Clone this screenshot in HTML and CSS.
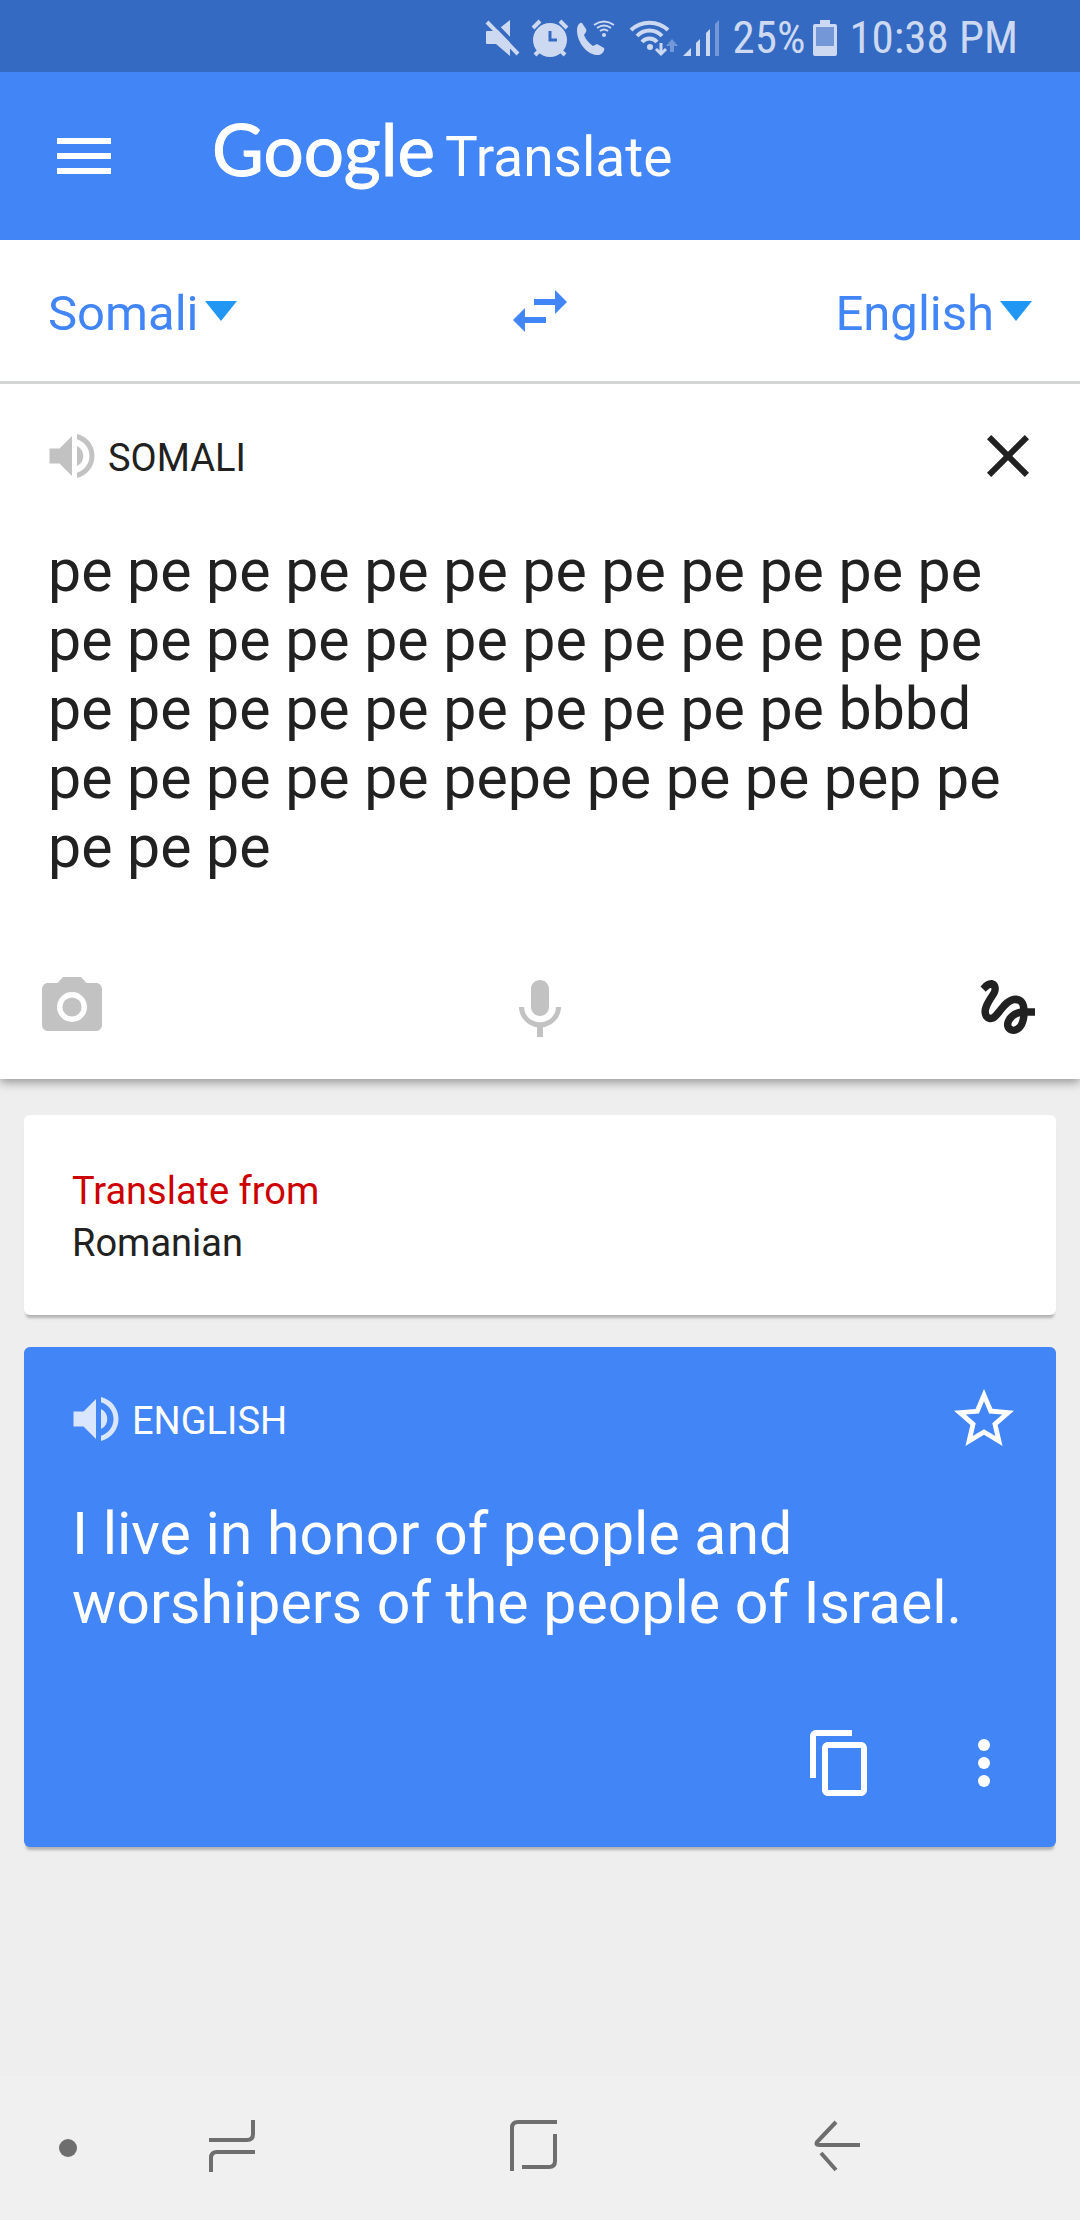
FILE: index.html
```html
<!DOCTYPE html>
<html lang="en">
<head>
<meta charset="utf-8">
<meta name="viewport" content="width=device-width, initial-scale=1">
<title>Google Translate</title>
<link rel="stylesheet" href="styles.css">
</head>
<body>
<div class="status">
  <svg class="status-icon" width="38" height="36" viewBox="0 0 38 36"><path fill="currentColor" d="M1 11h9L24 0v36L10 24H1q-1 0-1-1V12q0-1 1-1z"/><path class="cut" d="M4-1l31 32" stroke-width="4"/><path stroke="currentColor" stroke-width="4" d="M1 2l31 32"/></svg>
  <svg class="status-icon" width="42" height="36" viewBox="0 0 42 36"><circle cx="22" cy="20" r="17" fill="currentColor"/><path stroke="currentColor" stroke-width="4" d="M5 8l7-7M32 1l7 7M7 35l5-5M37 35l-5-5"/><path class="cut" fill="none" stroke-width="3" d="M22 11v9h7"/></svg>
  <svg class="status-icon" width="46" height="36" viewBox="0 0 46 36"><path fill="currentColor" d="M8 3l4 6c1 2 0 3-2 6 2 5 5 8 9 11l4-2 7 4c1 2-1 6-5 7C14 36 3 23 3 10c0-3 1-5 2-6q2-2 3-1z"/><circle cx="30" cy="15" r="2" fill="currentColor"/><path fill="none" stroke="currentColor" stroke-width="2" d="M26 11q4-3 8 0M23 8q7-5 14 0M20 5q10-7 20 0"/></svg>
  <svg class="status-icon" width="54" height="36" viewBox="0 0 54 36"><path fill="none" stroke="currentColor" stroke-width="4" d="M7 10a27 27 0 0 1 37 0M13 16a17 17 0 0 1 25 0M18 22a10 10 0 0 1 15 0"/><circle cx="26" cy="27" r="3" fill="currentColor"/><path fill="none" stroke="currentColor" stroke-width="3" d="M37 23v11M32 29l5 5 5-5"/><path class="dim" d="M48 19l6 7h-4v6h-4v-6h-4z"/></svg>
  <svg class="status-icon" width="42" height="36" viewBox="0 0 42 36"><path fill="currentColor" d="M1 36l8-8v8zM14 23l4-4v17h-4zM24 13l4-4v27h-4z"/><path class="dim" d="M33 4l4-4v36h-4z"/></svg>
  <span class="battery-level">25%</span>
  <svg class="status-icon" width="24" height="36" viewBox="0 0 24 36"><path fill="currentColor" d="M7 0h10v4h5q2 0 2 2v28q0 2-2 2H2q-2 0-2-2V6q0-2 2-2h5z"/><path class="dim" d="M3 7h18v19H3z"/></svg>
  <span class="clock">10:38 PM</span>
</div>

<header class="app-bar">
  <button class="icon-button" type="button" aria-label="Menu"><svg class="icon" viewBox="0 0 24 24"><path d="M3 18h18v-2H3v2zm0-5h18v-2H3v2zm0-7v2h18V6H3z"/></svg></button>
  <h1 class="brand"><span class="brand-google">Google</span><span class="brand-product">Translate</span></h1>
</header>

<div class="languages">
  <button class="language" type="button"><span class="language-name">Somali</span><svg class="caret" viewBox="0 0 32 20"><path d="M0 0h32L16 20z"/></svg></button>
  <button class="icon-button swap" type="button" aria-label="Swap languages"><svg class="icon" viewBox="0 0 24 24"><path d="M6.99 11L3 15l3.99 4v-3H14v-2H6.99v-3zM21 9l-3.99-4v3H10v2h7.01v3L21 9z"/></svg></button>
  <button class="language language-target" type="button"><span class="language-name">English</span><svg class="caret" viewBox="0 0 32 20"><path d="M0 0h32L16 20z"/></svg></button>
</div>

<main>
  <section class="source">
    <div class="panel-head">
      <button class="icon-button speak" type="button" aria-label="Listen to source"><svg class="icon-small" viewBox="0 0 24 24"><path d="M3 9v6h4l5 5V4L7 9H3zm13.500 3A4.500 4.500 0 0 0 14 7.970v8.050A4.470 4.470 0 0 0 16.500 12zM14 3.230v2.060c2.890.860 5 3.540 5 6.710s-2.110 5.850-5 6.710v2.060c4.010-.910 7-4.490 7-8.770s-2.990-7.860-7-8.770z"/></svg></button>
      <label class="panel-title" for="source-text">SOMALI</label>
      <button class="icon-button" type="button" aria-label="Clear text"><svg class="icon" viewBox="0 0 24 24"><path d="M19 6.410L17.590 5 12 10.590 6.410 5 5 6.410 10.590 12 5 17.590 6.410 19 12 13.410 17.590 19 19 17.590 13.410 12z"/></svg></button>
    </div>
    <textarea class="source-text" id="source-text" rows="5" spellcheck="false">pe pe pe pe pe pe pe pe pe pe pe pe pe pe pe pe pe pe pe pe pe pe pe pe pe pe pe pe pe pe pe pe pe pe bbbd pe pe pe pe pe pepe pe pe pe pep pe pe pe pe</textarea>
    <div class="input-tools">
      <button class="icon-button muted" type="button" aria-label="Camera"><svg class="icon" viewBox="0 0 24 24"><circle cx="12" cy="12" r="3.200"/><path d="M9 2L7.170 4H4c-1.100 0-2 .9-2 2v12c0 1.100.9 2 2 2h16c1.100 0 2-.9 2-2V6c0-1.100-.9-2-2-2h-3.170L15 2H9zm3 15a5 5 0 1 1 0-10 5 5 0 0 1 0 10z"/></svg></button>
      <button class="icon-button muted" type="button" aria-label="Voice"><svg class="icon" viewBox="0 -1 24 24"><path d="M12 14c1.660 0 2.990-1.340 2.990-3L15 5c0-1.660-1.340-3-3-3S9 3.340 9 5v6c0 1.660 1.340 3 3 3zm5.300-3c0 3-2.540 5.100-5.300 5.100S6.700 14 6.700 11H5c0 3.410 2.720 6.230 6 6.720V21h2v-3.280c3.280-.48 6-3.300 6-6.720h-1.700z"/></svg></button>
      <button class="icon-button" type="button" aria-label="Handwriting"><svg class="icon" viewBox="0 0 24 24"><path d="M4.590 6.890c.7-.71 1.400-1.350 1.710-1.220.5.2 0 1.030-.3 1.520-.25.42-2.860 3.890-2.860 6.310 0 1.280.48 2.340 1.340 2.980.75.56 1.740.73 2.640.46 1.070-.31 1.950-1.400 3.060-2.770 1.210-1.490 2.830-3.440 4.080-3.440 1.630 0 1.650 1.010 1.760 1.790-3.780.64-5.380 3.670-5.380 5.370 0 1.700 1.440 3.090 3.210 3.090 1.630 0 4.290-1.330 4.690-6.100H21v-2.500h-2.470c-.15-1.650-1.090-4.200-4.030-4.200-2.250 0-4.180 1.910-4.940 2.840-.58.73-2.060 2.480-2.290 2.720-.25.3-.68.84-1.110.84-.45 0-.72-.83-.36-1.920.35-1.090 1.400-2.860 1.850-3.520.78-1.140 1.300-1.920 1.300-3.280C8.950 3.690 7.310 3 6.440 3 5.120 3 3.970 4 3.720 4.250c-.36.36-.66.66-.88.93l1.750 1.710zm9.290 11.660c-.31 0-.74-.26-.74-.72 0-.6.73-2.200 2.870-2.760-.3 2.690-1.430 3.480-2.130 3.480z"/></svg></button>
    </div>
  </section>

  <div class="results">
    <section class="card suggestion">
      <p class="suggestion-title">Translate from</p>
      <a class="suggestion-link" href="#">Romanian</a>
    </section>

    <section class="card translation">
      <div class="panel-head">
        <button class="icon-button speak" type="button" aria-label="Listen to translation"><svg class="icon-small" viewBox="0 0 24 24"><path d="M3 9v6h4l5 5V4L7 9H3zm13.500 3A4.500 4.500 0 0 0 14 7.970v8.050A4.470 4.470 0 0 0 16.500 12zM14 3.230v2.060c2.890.860 5 3.540 5 6.710s-2.110 5.850-5 6.710v2.060c4.010-.910 7-4.490 7-8.770s-2.990-7.860-7-8.770z"/></svg></button>
        <h2 class="panel-title">ENGLISH</h2>
        <button class="icon-button" type="button" aria-label="Save"><svg class="icon" viewBox="0 0 24 24"><path d="M22 9.240l-7.190-.62L12 2 9.190 8.630 2 9.240l5.460 4.730L5.820 21 12 17.270 18.180 21l-1.630-7.030L22 9.240zM12 15.400l-3.760 2.270 1-4.280-3.320-2.880 4.380-.38L12 6.100l1.710 4.040 4.380.38-3.320 2.880 1 4.280L12 15.400z"/></svg></button>
      </div>
      <p class="translation-text">I live in honor of people and worshipers of the people of Israel.</p>
      <div class="translation-tools">
        <button class="icon-button" type="button" aria-label="Copy"><svg class="icon" viewBox="0 0 24 24"><path d="M16 1H4c-1.100 0-2 .9-2 2v14h2V3h12V1zm3 4H8c-1.100 0-2 .9-2 2v14c0 1.100.9 2 2 2h11c1.100 0 2-.9 2-2V7c0-1.100-.9-2-2-2zm0 16H8V7h11v14z"/></svg></button>
        <button class="icon-button" type="button" aria-label="More options"><svg class="icon" viewBox="0 0 24 24"><circle cx="12" cy="6" r="2"/><circle cx="12" cy="12" r="2"/><circle cx="12" cy="18" r="2"/></svg></button>
      </div>
    </section>
  </div>
</main>

<nav class="system-nav" aria-label="System">
  <button class="icon-button" type="button" aria-label="Pin bar"><svg class="nav-dot" viewBox="0 0 18 18"><circle cx="9" cy="9" r="9"/></svg></button>
  <button class="icon-button" type="button" aria-label="Recents"><svg class="nav-icon" viewBox="0 0 54 54"><path d="M48 1v14q0 6-6 6H4M6 53V39q0-6 6-6h38"/></svg></button>
  <button class="icon-button" type="button" aria-label="Home"><svg class="nav-icon" viewBox="0 0 54 54"><path d="M5 52V9q0-6 6-6h39M48 15v27q0 6-6 6H15"/></svg></button>
  <button class="icon-button" type="button" aria-label="Back"><svg class="nav-icon" viewBox="0 0 54 54"><path d="M26 3L7 23q-2 3 2 3h41M11 34l15 17"/></svg></button>
</nav>
</body>
</html>
```
FILE: styles.css
```css
* { box-sizing: border-box; }

body {
  margin: 0;
  min-height: 100vh;
  display: flex;
  flex-direction: column;
  background: #eee;
  color: #212121;
  font-family: Roboto, "Liberation Sans", sans-serif;
}

h1, h2, p { margin: 0; font-weight: 400; }

button {
  margin: 0;
  padding: 0;
  border: 0;
  background: none;
  color: inherit;
  font: inherit;
}

.icon-button { display: flex; flex: none; }
.icon { width: 72px; height: 72px; fill: currentColor; }
.icon-small { width: 60px; height: 60px; fill: currentColor; }

/* System status bar */
.status {
  display: flex;
  align-items: center;
  justify-content: flex-end;
  gap: 4px;
  height: 72px;
  padding: 4px 62px 0 0;
  background: #346ac1;
  color: #cdd9f0;
  font-family: "Roboto Condensed", "Liberation Sans Narrow", Roboto, sans-serif;
  font-size: 45px;
  line-height: 54px;
}
.status-icon { flex: none; overflow: visible; }
.status-icon .cut { stroke: #346ac1; }
.status-icon .dim { fill: #7498d7; }
.battery-level { margin: 0 4px; }
.clock { margin-left: 8px; }

/* App bar */
.app-bar {
  display: flex;
  align-items: center;
  gap: 92px;
  height: 168px;
  padding: 0 48px;
  background: #4285f6;
  color: #fff;
}
.brand { display: flex; align-items: baseline; gap: 10px; padding-bottom: 14px; }
.brand-google { font-family: Lato, sans-serif; font-size: 71px; line-height: 84px; -webkit-text-stroke: 1px currentColor; }
.brand-product { font-size: 55px; }

/* Language picker */
.languages {
  position: relative;
  display: grid;
  grid-template-columns: 1fr auto 1fr;
  align-items: center;
  height: 144px;
  padding: 0 48px;
  border-bottom: 3px solid #d4d6d5;
  background: #fff;
  color: #4285f6;
}
.language { display: flex; align-items: center; gap: 6px; font-size: 49px; line-height: 60px; }
.language-name { padding-top: 6px; }
.language-target { justify-self: end; }
.caret { width: 32px; height: 20px; fill: #2196f3; }

/* Source panel */
.source {
  padding: 36px;
  background: #fff;
  box-shadow: 0 3px 10px rgba(0, 0, 0, .4);
}
.panel-head { display: flex; align-items: center; }
.panel-title { flex: 1; margin-left: 6px; padding-top: 4px; font-size: 38px; line-height: 48px; }
.speak { margin-left: 6px; }
.source .speak, .muted { color: #c2c2c2; }
.source-text {
  display: block;
  width: 100%;
  margin: 44px 0 0;
  padding: 0 12px;
  border: 0;
  outline: 0;
  resize: none;
  overflow: hidden;
  background: none;
  color: inherit;
  font: 59px/69px Roboto, "Liberation Sans", sans-serif;
}
.input-tools { display: flex; justify-content: space-between; margin-top: 90px; }

/* Results */
.results { display: flex; flex-direction: column; gap: 32px; padding: 36px 24px; }
.card { border-radius: 6px; box-shadow: 0 5px 3px -2px rgba(0, 0, 0, .25); }
.suggestion { padding: 50px 48px 46px; background: #fff; font-size: 38px; line-height: 52px; }
.suggestion-title { color: #c00; }
.suggestion-link { color: inherit; text-decoration: none; }
.translation { padding: 36px; background: #4285f6; color: #fff; }
.translation .speak { color: #d9e6fd; }
.translation-text { margin: 44px 0 90px; padding: 0 12px; font-size: 59px; line-height: 69px; }
.translation-tools { display: flex; justify-content: flex-end; gap: 72px; padding-bottom: 12px; }

/* System navigation */
.system-nav {
  display: grid;
  grid-template-columns: 136px 192px 1fr 194px;
  align-items: center;
  justify-items: center;
  height: 144px;
  margin-top: auto;
  padding-right: 146px;
  background: #f0f0f0;
}
.nav-dot { width: 18px; height: 18px; fill: #6e6e6e; }
.nav-icon { width: 54px; height: 54px; margin-bottom: 4px; fill: none; stroke: #6e6e6e; stroke-width: 4px; }
```
